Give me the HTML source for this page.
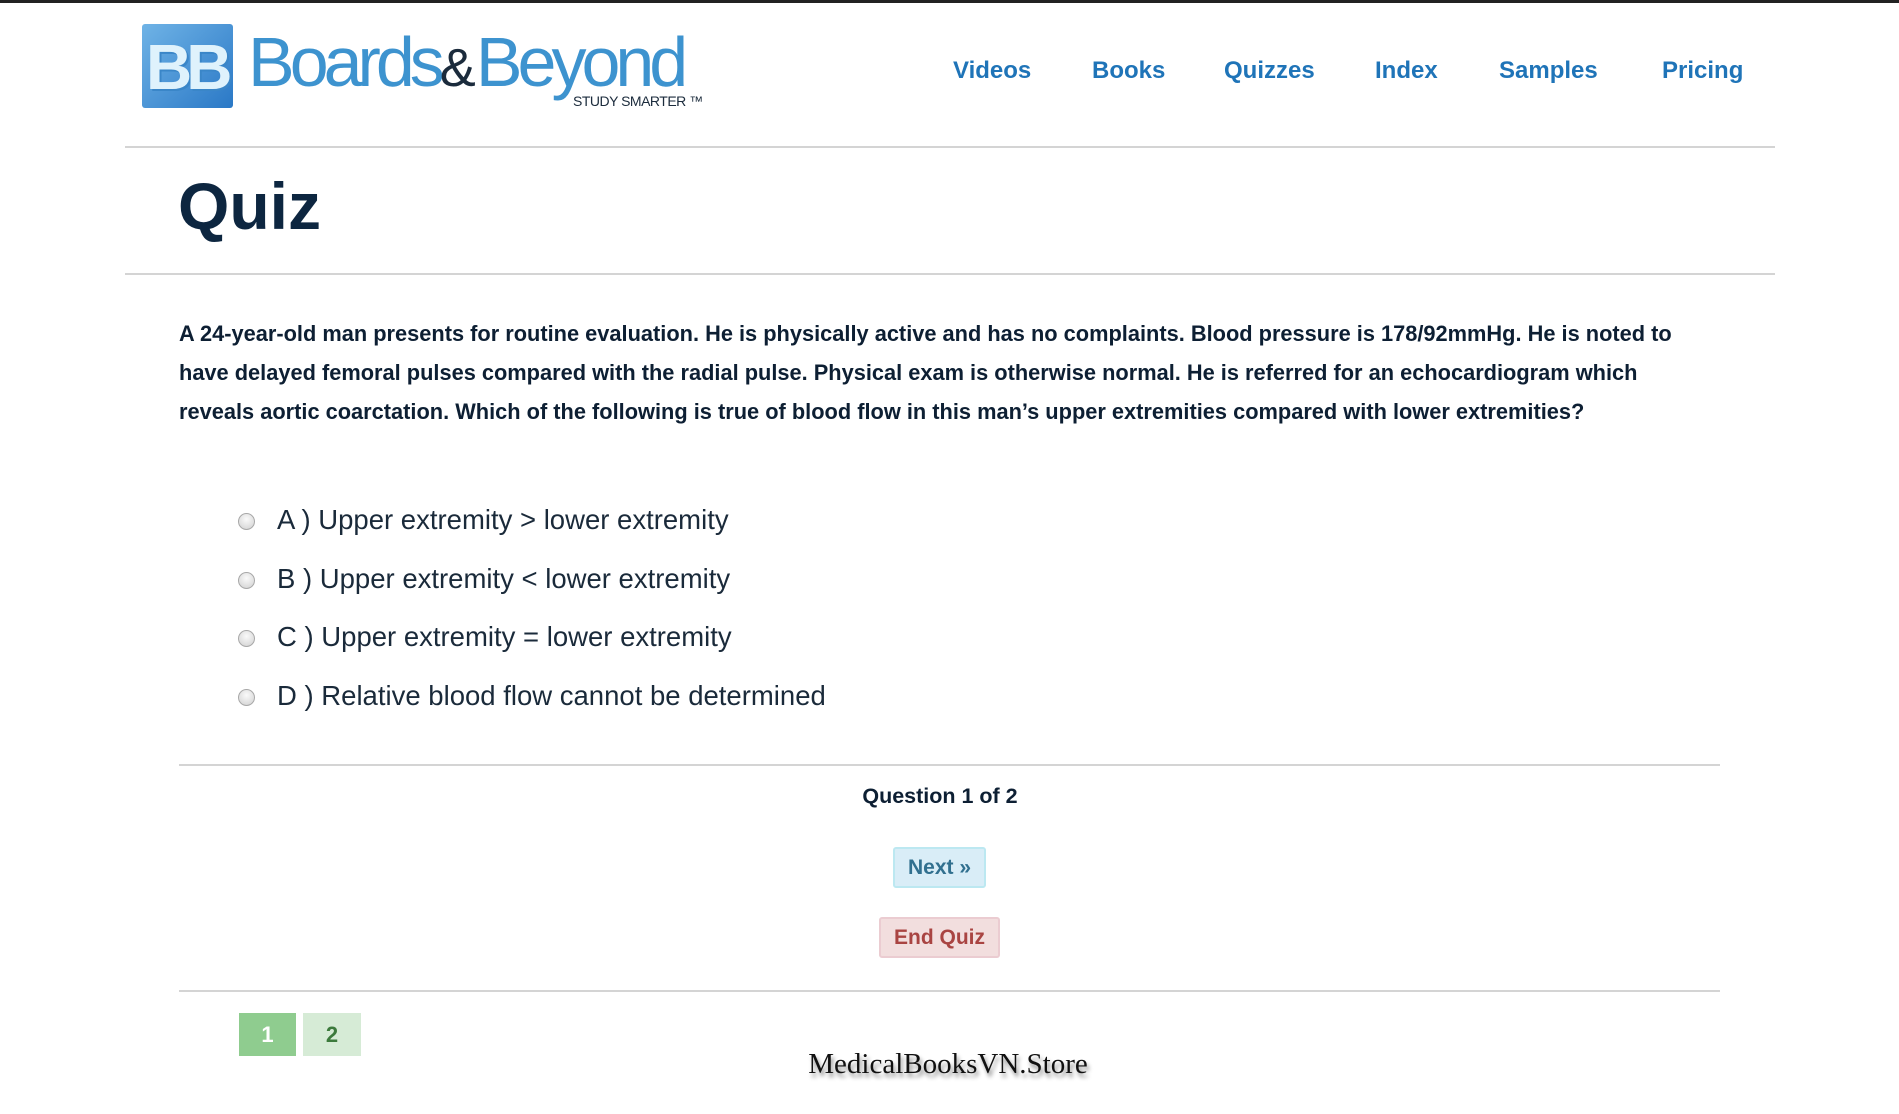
<!DOCTYPE html>
<html><head><meta charset="utf-8"><style>
*{margin:0;padding:0;box-sizing:border-box}
body{width:1899px;height:1114px;background:#fff;position:relative;overflow:hidden;font-family:"Liberation Sans",sans-serif;color:#0d2a45}
.a{position:absolute;white-space:nowrap}
.hr{position:absolute;height:2px;background:#d4d4d4}
.nav{position:absolute;top:57px;font-size:24px;font-weight:bold;color:#1f74b8}
.opt{position:absolute;left:277px;font-size:27.5px;color:#1a2a3a}
.rad{position:absolute;left:238px;width:17px;height:17px;border-radius:50%;background:radial-gradient(circle at 50% 35%,#fafafa,#d0d0d0);border:1px solid #a8a8a8}
</style></head><body>
<div class="a" style="left:0;top:0;width:1899px;height:3px;background:#222"></div>
<div class="a" style="left:142px;top:24px;width:91px;height:84px;background:linear-gradient(135deg,#6fb3e6,#2a78c6);border-radius:3px;overflow:hidden">
<div class="a" style="left:4px;top:6px;font-size:64px;font-weight:bold;color:#dff2fc;letter-spacing:-6px;text-shadow:2px 2px 0 #3a86c8">BB</div></div>
<div class="a" style="left:248px;top:22px;font-size:70px;color:#3d93cf;letter-spacing:-5px">Boards<span style="color:#1b2b3c;font-size:54px;letter-spacing:0">&amp;</span>Beyond</div>
<div class="a" style="left:573px;top:93px;font-size:14px;color:#1b2b3c;letter-spacing:-0.5px">STUDY SMARTER ™</div>
<div class="nav" style="left:953px">Videos</div>
<div class="nav" style="left:1092px">Books</div>
<div class="nav" style="left:1224px">Quizzes</div>
<div class="nav" style="left:1375px">Index</div>
<div class="nav" style="left:1499px">Samples</div>
<div class="nav" style="left:1662px">Pricing</div>
<div class="hr" style="left:125px;top:146px;width:1650px"></div>
<div class="a" style="left:178px;top:168px;font-size:66px;font-weight:bold;color:#0d2640">Quiz</div>
<div class="hr" style="left:125px;top:273px;width:1650px"></div>
<div class="a" style="left:179px;top:314px;width:1520px;white-space:normal;font-size:21.8px;font-weight:bold;line-height:39px;color:#0d1f33">A 24-year-old man presents for routine evaluation. He is physically active and has no complaints. Blood pressure is 178/92mmHg. He is noted to have delayed femoral pulses compared with the radial pulse. Physical exam is otherwise normal. He is referred for an echocardiogram which reveals aortic coarctation. Which of the following is true of blood flow in this man’s upper extremities compared with lower extremities?</div>
<div class="rad" style="top:513px"></div><div class="opt" style="top:504px">A ) Upper extremity &gt; lower extremity</div>
<div class="rad" style="top:572px"></div><div class="opt" style="top:563px">B ) Upper extremity &lt; lower extremity</div>
<div class="rad" style="top:630px"></div><div class="opt" style="top:621px">C ) Upper extremity = lower extremity</div>
<div class="rad" style="top:689px"></div><div class="opt" style="top:680px">D ) Relative blood flow cannot be determined</div>
<div class="hr" style="left:179px;top:764px;width:1541px"></div>
<div class="a" style="left:0;width:1880px;top:784px;text-align:center;font-size:21.5px;font-weight:bold;color:#0d1f33">Question 1 of 2</div>
<div class="a" style="left:893px;top:847px;width:93px;height:41px;background:#d9edf7;border:2px solid #bce8f1;border-radius:3px;color:#31708f;font-weight:bold;font-size:21px;text-align:center;line-height:37px">Next »</div>
<div class="a" style="left:879px;top:917px;width:121px;height:41px;background:#f2dede;border:2px solid #ebccd1;border-radius:3px;color:#a94442;font-weight:bold;font-size:21px;text-align:center;line-height:37px">End Quiz</div>
<div class="hr" style="left:179px;top:990px;width:1541px"></div>
<div class="a" style="left:239px;top:1013px;width:57px;height:43px;background:#8fcc8f;color:#fff;font-weight:bold;font-size:22px;text-align:center;line-height:43px">1</div>
<div class="a" style="left:303px;top:1013px;width:58px;height:43px;background:#d6ebd6;color:#3c7a3c;font-weight:bold;font-size:22px;text-align:center;line-height:43px">2</div>
<div class="a" style="left:0;width:1896px;top:1048px;text-align:center;font-family:'Liberation Serif',serif;font-size:29px;color:#111;text-shadow:2px 4px 4px rgba(0,0,0,.45)">MedicalBooksVN.Store</div>
</body></html>
